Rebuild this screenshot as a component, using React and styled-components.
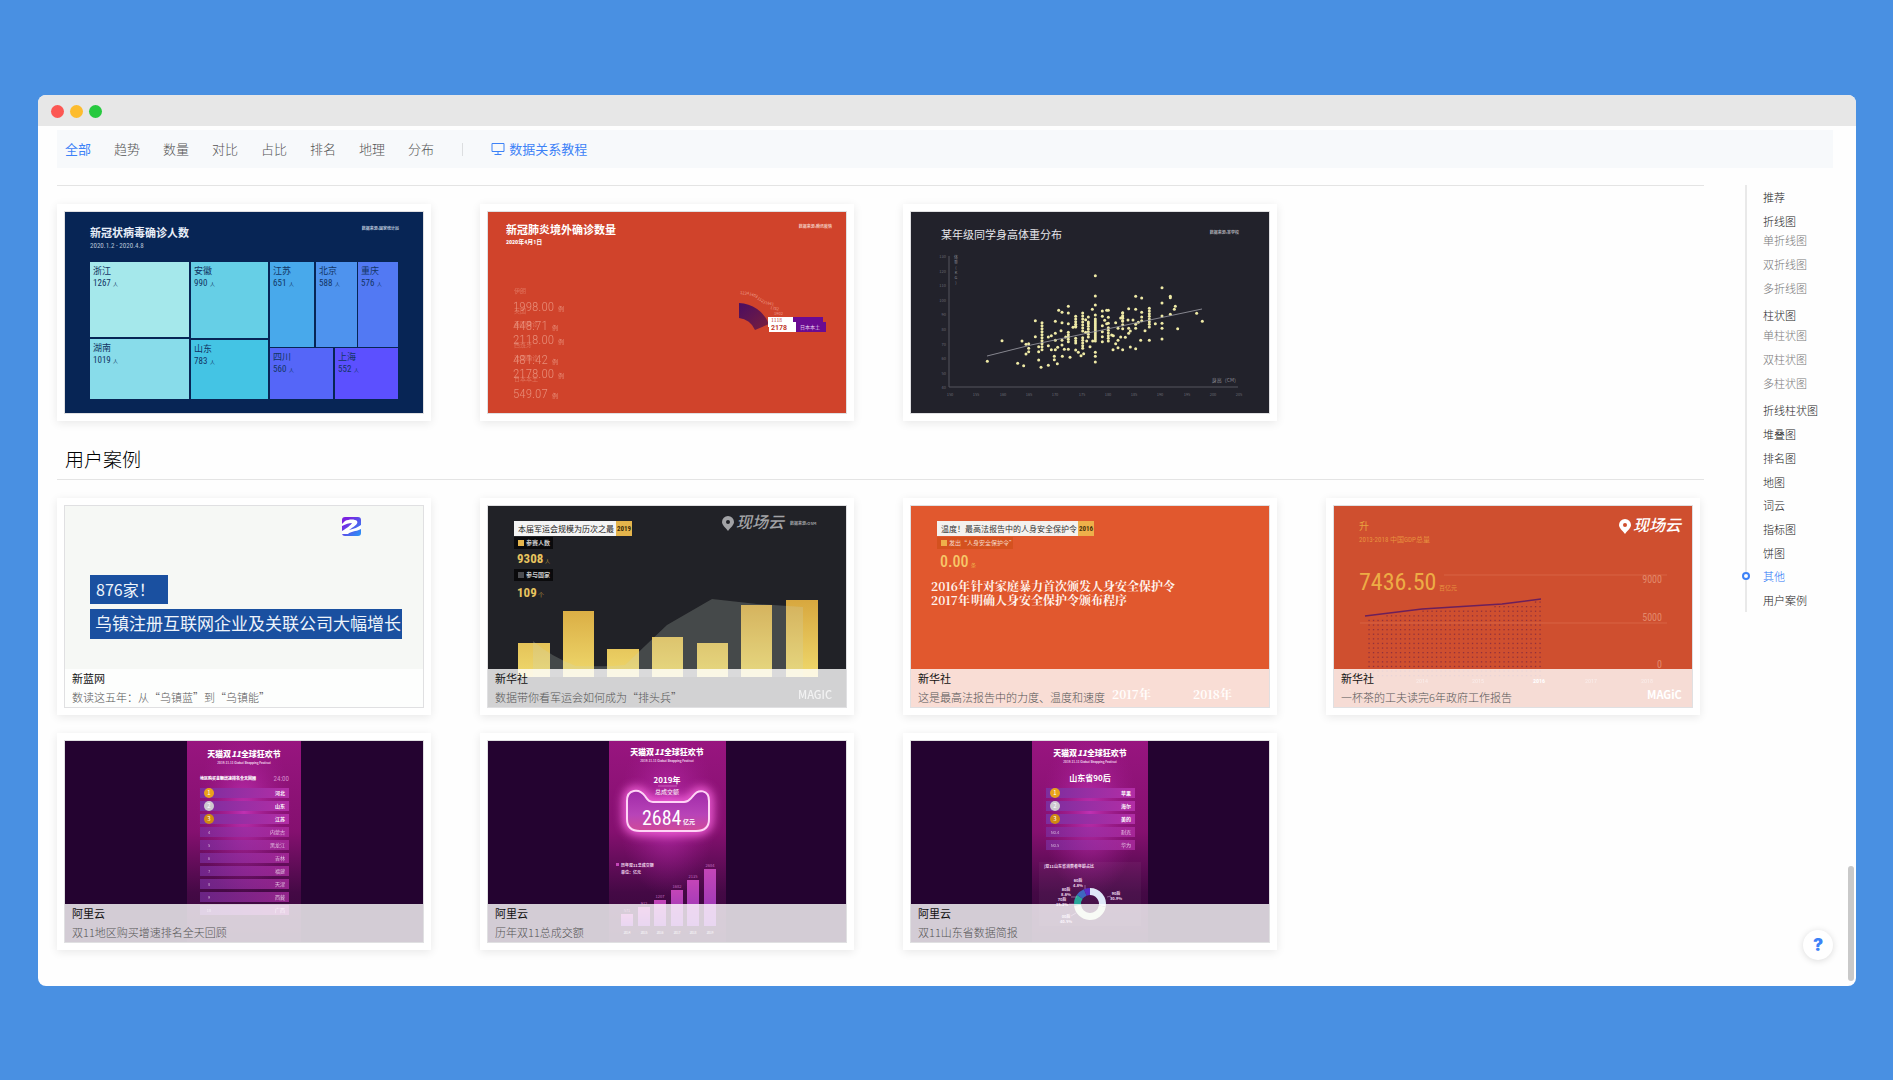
import React from "react";
import styled, { createGlobalStyle, css } from "styled-components";

const NARROW = '"Liberation Sans Narrow", "Roboto Condensed", "DejaVu Sans Condensed", "Noto Sans CJK SC", sans-serif';

const GlobalStyle = createGlobalStyle`
  *, *::before, *::after { box-sizing: border-box; }
  body {
    margin: 0;
    background: #4990e2;
    font-family: "Noto Sans CJK SC", sans-serif;
    font-weight: 300;
    color: #222;
  }
  a { color: inherit; text-decoration: none; }
  ul { list-style: none; margin: 0; padding: 0; }
`;

const Page = styled.div`
  padding: 95px 37px 94px 38px;
`;

const Window = styled.div`
  position: relative;
  border-radius: 8px;
  background: #fefefe;
  overflow: hidden;
`;

const TitleBar = styled.div`
  display: flex;
  align-items: center;
  gap: 6px;
  height: 31px;
  padding: 1px 13px 0;
  background: #e7e7e7;
`;

const Light = styled.span`
  width: 13px;
  height: 13px;
  border-radius: 50%;
  background: ${(p) => p.$color};
`;

const Content = styled.div`
  padding: 4px 23px 36px 19px;
`;

const Toolbar = styled.nav`
  display: flex;
  align-items: center;
  gap: 23px;
  height: 38px;
  padding: 0 8px;
  background: #f7f9fb;
`;

const Tab = styled.button`
  padding: 0;
  border: 0;
  background: none;
  font: inherit;
  font-size: 13px;
  font-weight: ${(p) => (p.$active ? 400 : 300)};
  line-height: 20px;
  color: ${(p) => (p.$active ? "#3d82f7" : "#555")};
  cursor: pointer;
`;

const Separator = styled.span`
  width: 1px;
  height: 13px;
  margin: 0 5px;
  background: #dcdee0;
`;

const TutorialLink = styled.a`
  display: flex;
  align-items: center;
  gap: 4px;
  font-size: 13px;
  font-weight: 400;
  line-height: 20px;
  color: #3d82f7;
`;

const Columns = styled.div`
  display: flex;
  align-items: flex-start;
  margin-top: 17px;
`;

const Main = styled.main`
  flex: 1;
  min-width: 0;
`;

const Grid = styled.div`
  display: grid;
  grid-template-columns: repeat(4, minmax(0, 1fr));
  gap: 18px 49px;
  padding: 18px 4px 0 0;
  border-top: 1px solid #e4e4e4;
`;

const Heading = styled.h2`
  margin: 24px 0 6px;
  padding-left: 8px;
  font-size: 19px;
  font-weight: 300;
  line-height: 28px;
  color: #000;
`;

const CardBox = styled.a`
  display: block;
  padding: 7px;
  background: #fff;
  box-shadow: 0 2px 9px rgba(0, 0, 0, 0.09);
`;

const Thumb = styled.div`
  position: relative;
  border: 1px solid #e0e0e2;
  overflow: hidden;

  svg {
    display: block;
    width: 100%;
    height: auto;
  }
`;

const Caption = styled.div`
  position: absolute;
  left: 0;
  right: 0;
  bottom: 0;
  height: 38px;
  padding: 0 7px;
  background: rgba(255, 255, 255, 0.8);
  font-size: 11px;
  line-height: 19px;
`;

const Owner = styled.div`
  color: #111;
  font-weight: 400;
`;

const Description = styled.div`
  color: #555;
  white-space: nowrap;
`;

const Anchors = styled.ul`
  display: grid;
  grid-auto-rows: 1fr;
  width: 88px;
  height: 427px;
  margin-left: 41px;
  padding-left: 16px;
  border-left: 2px solid #e9e9e9;
`;

const AnchorRow = styled.li`
  display: flex;
  align-items: center;
  padding-bottom: ${(p) => (p.$sub ? 8 : 0)}px;
`;

const AnchorLink = styled.a`
  position: relative;
  font-size: 11px;
  line-height: 14px;
  white-space: nowrap;
  color: ${(p) => (p.$active ? "#2a74f5" : p.$sub ? "#777" : "#222")};

  ${(p) =>
    p.$active &&
    css`
      &::before {
        content: "";
        position: absolute;
        left: -21px;
        top: 3px;
        width: 8px;
        height: 8px;
        border: 2px solid #3d82f7;
        border-radius: 50%;
        background: #fff;
      }
    `}
`;

const HelpButton = styled.button`
  position: absolute;
  right: 23px;
  bottom: 26px;
  width: 30px;
  height: 30px;
  padding: 0;
  border: 0;
  border-radius: 50%;
  background: #fff;
  box-shadow: 0 1px 7px rgba(0, 0, 0, 0.14);
  font: 900 17px/30px Inter, Roboto, sans-serif;
  color: #3d82f7;
  cursor: pointer;
`;

const ScrollThumb = styled.span`
  position: absolute;
  right: 2px;
  bottom: 5px;
  width: 6px;
  height: 115px;
  border-radius: 3px;
  background: #c9c9c9;
`;

const Canvas = ({ bg, label, children }) => (
  <svg viewBox="0 0 358 201" role="img" aria-label={label} fontFamily='"Noto Sans CJK SC", sans-serif' fontWeight="400">
    <rect width="358" height="201" fill={bg} />
    {children}
  </svg>
);

const tiles = [
  ["浙江", "1267", 25, 50, 99, 75, "#a5e8eb", 20],
  ["湖南", "1019", 25, 127, 99, 60, "#88dcea", 20],
  ["安徽", "990", 126, 50, 77, 76, "#66cfe6", 16],
  ["山东", "783", 126, 128, 77, 59, "#44c4e4", 16],
  ["江苏", "651", 205, 50, 44, 85, "#48a9eb", 16],
  ["北京", "588", 251, 50, 41, 85, "#4e93ee", 16],
  ["重庆", "576", 293, 50, 40, 85, "#5279f3", 16],
  ["四川", "560", 205, 136, 63, 51, "#5566f8", 16],
  ["上海", "552", 270, 136, 63, 51, "#5c50ff", 16],
];

const Treemap = () => (
  <Canvas bg="#072555" label="新冠状病毒确诊人数">
    <text x="25" y="25" fontSize="11" fontWeight="700" fill="#e8eef8">新冠状病毒确诊人数</text>
    <text x="25" y="36" fontSize="7" fontFamily={NARROW} fill="#b8c4d8">2020.1.2 - 2020.4.8</text>
    <text x="334" y="18" fontSize="4" fontWeight="700" fill="#b8c4d8" textAnchor="end">数据来源:国家统计局</text>
    {tiles.map(([name, value, x, y, w, h, color, offset]) => (
      <g key={name}>
        <rect x={x} y={y} width={w} height={h} fill={color} />
        <text x={x + 3} y={y + 12} fontSize="9" fill="#123564">{name}</text>
        <text x={x + 3} y={y + 24} fontSize="9" fontFamily={NARROW} fill="#123564">{value}</text>
        <text x={x + 3 + offset} y={y + 24} fontSize="5" fill="#123564">人</text>
      </g>
    ))}
  </Canvas>
);

const counts = [
  ["1998.00", 99, 44],
  ["448.71", 118, 38],
  ["2118.00", 132, 44],
  ["481.42", 152, 38],
  ["2178.00", 166, 44],
  ["549.07", 186, 38],
];

const faintLabels = [
  ["伊朗", 81],
  ["英国", 101],
  ["美国确诊", 114],
  ["西班牙", 135],
  ["法国确诊", 148],
  ["日本本土", 169],
];

const arcNumbers = [
  ["1234", 252, 82, 5],
  ["1402", 261, 83, 20],
  ["1523", 269, 87, 35],
  ["1641", 277, 92, 10],
  ["1782", 282, 97, 10],
  ["1902", 286, 103, 0],
];

const Abroad = () => (
  <Canvas bg="#d0432b" label="新冠肺炎境外确诊数量">
    <defs>
      <linearGradient id="arc" x1="0" y1="0" x2="1" y2="1">
        <stop offset="0" stopColor="#4a0d62" />
        <stop offset="1" stopColor="#7a1f3c" />
      </linearGradient>
    </defs>
    <text x="18" y="22" fontSize="11" fontWeight="700" fill="#fff">新冠肺炎境外确诊数量</text>
    <text x="18" y="32" fontSize="6" fontWeight="700" fontFamily={NARROW} fill="#fff">2020年4月1日</text>
    <text x="344" y="16" fontSize="4" fontWeight="700" fill="#f3c8bd" textAnchor="end">数据来源:腾讯疫情</text>
    {counts.map(([value, y, w]) => (
      <g key={value} fill="#ee9f8b" opacity="0.8">
        <text x="25" y={y} fontSize="13" fontWeight="300" fontFamily={NARROW}>{value}</text>
        <text x={26 + w} y={y} fontSize="6">例</text>
      </g>
    ))}
    {faintLabels.map(([name, y]) => (
      <text key={name} x="26" y={y} fontSize="6" fill="#ee9f8b" opacity="0.5">{name}</text>
    ))}
    <path d="M251 91A34 34 0 0 1 281 112L267 118A19 19 0 0 0 251 106Z" fill="url(#arc)" />
    {arcNumbers.map(([value, x, y, r]) => (
      <text key={value} x={x} y={y} fontSize="4" fill="#ee9f8b" transform={`rotate(${r} ${x} ${y})`}>{value}</text>
    ))}
    <rect x="280" y="105" width="26" height="10" fill="#fff" />
    <rect x="305" y="105" width="30" height="10" fill="#6a0b91" />
    <rect x="281" y="110" width="27" height="10" fill="#fff" />
    <rect x="308" y="110" width="30" height="10" fill="#6a0b91" />
    <text x="283" y="110" fontSize="5" fill="#c0392b">1118</text>
    <text x="283" y="118" fontSize="7" fontWeight="700" fontFamily='Roboto, sans-serif' fill="#c0392b">2178</text>
    <text x="312" y="117" fontSize="5" fill="#e6cdf0">日本本土</text>
  </Canvas>
);

const singles = [
  [604, 242], [604, 303], [604, 330], [804, 278], [725, 304], [743, 309], [829, 304], [829, 308], [804, 324],
  [844, 334], [841, 343], [829, 358], [804, 363], [804, 385], [804, 400], [804, 432], [851, 401], [908, 355], [925, 379],
  [523, 334], [494, 346], [504, 352], [523, 354], [424, 377], [424, 425], [324, 437], [384, 438], [396, 448], [404, 446],
  [404, 460], [404, 470], [396, 477], [434, 470], [434, 455], [434, 495], [280, 499], [371, 505], [389, 512], [441, 517],
  [463, 511], [490, 506], [481, 494], [481, 484], [505, 484], [528, 487], [484, 379], [504, 383], [523, 386], [501, 407],
  [484, 415], [472, 422], [463, 426], [463, 452], [472, 464], [484, 464], [491, 457], [484, 436], [504, 436], [504, 450],
  [511, 463], [523, 463], [545, 465], [553, 472], [561, 482], [569, 476], [515, 426], [537, 397], [545, 394], [595, 343],
  [604, 360], [583, 366], [583, 381], [575, 374], [625, 348], [643, 346], [638, 346], [625, 364], [632, 376], [638, 386],
  [643, 367], [643, 385], [665, 383], [672, 400], [680, 369], [686, 353], [686, 366], [686, 378], [704, 341], [725, 343],
  [743, 352], [743, 366], [743, 377], [702, 375], [717, 375], [733, 382], [725, 388], [725, 400], [753, 407], [740, 436],
  [766, 436], [784, 386], [709, 456], [725, 461], [686, 464], [657, 464], [672, 458], [665, 446], [680, 426], [694, 427],
  [709, 408], [704, 415], [704, 400], [686, 389], [686, 401], [658, 422], [672, 436], [604, 472], [604, 484], [604, 501],
  [588, 455], [596, 438], [578, 438], [575, 412], [583, 426], [625, 392], [625, 410], [625, 425], [625, 440], [653, 420],
];

const stacks = [
  [444, 383, 470, 9],
  [523, 412, 444, 7],
  [545, 364, 400, 8],
  [545, 430, 448, 7],
  [566, 354, 410, 9],
  [566, 428, 466, 8],
  [583, 386, 424, 8],
  [604, 372, 440, 6],
  [643, 398, 440, 8],
  [766, 340, 402, 8],
  [686, 354, 382, 8],
];

const dots = [...singles];
stacks.forEach(([x, from, to, step]) => {
  for (let y = from; y <= to; y += step) dots.push([x, y]);
});

const Scatter = () => (
  <Canvas bg="#22222b" label="某年级同学身高体重分布">
    <text x="30" y="27" fontSize="11" fill="#e6e6ea">某年级同学身高体重分布</text>
    <text x="328" y="22" fontSize="4" fontWeight="700" fill="#aaaab2" textAnchor="end">数据来源:某学校</text>
    <path d="M38 44V175H327" fill="none" stroke="#55555f" />
    {[130, 120, 110, 100, 90, 80, 70, 60, 50, 40].map((v, i) => (
      <text key={v} x="35" y={46 + Math.round(i * 14.6)} fontSize="4" fill="#6a6a74" textAnchor="end">{v}</text>
    ))}
    {[150, 155, 160, 165, 170, 175, 180, 185, 190, 195, 200, 205].map((v, i) => (
      <text key={v} x={39 + Math.round(i * 26.3)} y="184" fontSize="4" fill="#6a6a74" textAnchor="middle">{v}</text>
    ))}
    {["体", "重", "(", "K", "G", ")"].map((c, i) => (
      <text key={c} x="45" y={47 + i * 5} fontSize="4" fill="#8a8a94" textAnchor="middle">{c}</text>
    ))}
    <text x="328" y="170" fontSize="5" fill="#8a8a94" textAnchor="end">身高（CM）</text>
    {dots.map(([x, y]) => (
      <circle key={`${x}-${y}`} cx={(x - 51) / 3} cy={(y - 51) / 3} r="1.5" fill="#efeaa6" />
    ))}
    <path d="M76 144L120 133L291 97" fill="none" stroke="#a0a0a8" strokeWidth="0.8" />
  </Canvas>
);

const Wuzhen = () => (
  <Canvas bg="#f6f8f5" label="乌镇注册互联网企业">
    <defs>
      <linearGradient id="zlogo" x1="0" y1="0" x2="1" y2="1">
        <stop offset="0.2" stopColor="#7a22e0" />
        <stop offset="0.9" stopColor="#2f8cf5" />
      </linearGradient>
    </defs>
    <rect x="277" y="11" width="19" height="19" rx="3" fill="url(#zlogo)" />
    <path d="M280 15C284 13 290 13 292 15C294 18 288 21 284 24C289 23 293 21 296 19V23C290 26 286 25 283 28H277V25C282 22 286 19 287 17C284 17 281 18 277 20V18Z" fill="#fff" />
    <rect x="25" y="69" width="78" height="29" fill="#1a50a0" />
    <rect x="25" y="103" width="312" height="30" fill="#1a50a0" />
    <text x="31" y="90" fontSize="16" fill="#eef4fb">876家！</text>
    <text x="30" y="124" fontSize="17" fill="#eef4fb">乌镇注册互联网企业及关联公司大幅增长</text>
  </Canvas>
);

const LiveLogo = ({ x, y, size, color, hole }) => (
  <g fill={color}>
    <path d={`M${x} ${y}a6 6 0 0 1 12 0c0 3-3 5-6 9c-3-4-6-6-6-9z`} />
    <circle cx={x + 6} cy={y} r="2" fill={hole} />
    <text x={x + 14} y={y + 6} fontSize={size} fontWeight="500" fontStyle="italic">现场云</text>
  </g>
);

const militaryBars = [
  [30, 137, 32], [75, 105, 31], [119, 143, 32], [164, 131, 31], [209, 137, 31], [253, 99, 31], [298, 94, 32],
];

const Military = () => (
  <Canvas bg="#212227" label="本届军运会规模为历次之最">
    <defs>
      <linearGradient id="gold" gradientUnits="userSpaceOnUse" x1="0" y1="95" x2="0" y2="171">
        <stop offset="0" stopColor="#d8a83f" />
        <stop offset="1" stopColor="#efd96d" />
      </linearGradient>
    </defs>
    <rect x="26" y="15" width="102" height="15" fill="#f4f4f4" />
    <rect x="128" y="15" width="16" height="15" fill="#e5b54c" />
    <text x="30" y="26" fontSize="8" fill="#222">本届军运会规模为历次之最</text>
    <text x="136" y="25" fontSize="7" fontWeight="700" fontFamily={NARROW} fill="#3a2c0a" textAnchor="middle">2019</text>
    <rect x="26" y="31" width="39" height="12" fill="#0a0a0c" />
    <rect x="30" y="34" width="6" height="6" fill="#e5b54c" />
    <text x="38" y="39" fontSize="6" fontWeight="700" fill="#ccc">参赛人数</text>
    <text x="29" y="57" fontSize="13" fontWeight="700" fontFamily={NARROW} fill="#e8c45f">9308</text>
    <text x="57" y="57" fontSize="5" fill="#b8923c">人</text>
    <rect x="26" y="63" width="39" height="12" fill="#0a0a0c" />
    <rect x="30" y="66" width="6" height="6" fill="#4b4c50" />
    <text x="38" y="71" fontSize="6" fontWeight="700" fill="#ccc">参与国家</text>
    <text x="29" y="91" fontSize="13" fontWeight="700" fontFamily={NARROW} fill="#e8c45f">109</text>
    <text x="50" y="91" fontSize="6" fill="#b8923c">个</text>
    <LiveLogo x={234} y={16} size={16} color="#a2a3a6" hole="#212227" />
    <text x="302" y="19" fontSize="4" fontWeight="700" fill="#a2a3a6">数据来源:OSM</text>
    {militaryBars.map(([x, y, w]) => (
      <rect key={x} x={x} y={y} width={w} height={171 - y} fill="url(#gold)" />
    ))}
    <path d="M45 135Q62 150 88 160Q120 161 137 159L179 119L224 93L269 98L315 101V171H45Z" fill="#c8d8c8" opacity="0.22" />
    <text x="310" y="193" fontSize="11" fontWeight="500" fill="#fff" opacity="0.7">MAGIC</text>
  </Canvas>
);

const Court = () => (
  <Canvas bg="#e1582e" label="最高法报告中的人身安全保护令">
    <rect x="26" y="15" width="141" height="15" fill="#f4f1ee" />
    <rect x="167" y="15" width="16" height="15" fill="#eeb04a" />
    <text x="30" y="26" fontSize="8" fill="#333">温度！最高法报告中的人身安全保护令</text>
    <text x="175" y="25" fontSize="7" fontWeight="700" fontFamily={NARROW} fill="#4a300a" textAnchor="middle">2016</text>
    <rect x="26" y="31" width="76" height="12" fill="#d4511f" />
    <rect x="30" y="34" width="6" height="6" fill="#eeb04a" />
    <text x="38" y="39" fontSize="6" fill="#f6d9c8">发出“人身安全保护令”</text>
    <text x="29" y="61" fontSize="16" fontWeight="500" fontFamily={NARROW} fill="#f7c668">0.00</text>
    <text x="60" y="61" fontSize="5" fill="#eeb04a">条</text>
    <g fontFamily='"Noto Serif CJK SC", "Liberation Serif", "Noto Sans CJK SC", serif' fontWeight="700" fill="#fff3ec">
      <text x="20" y="85" fontSize="12">2016年</text>
      <text x="60" y="85" fontSize="12">针对家庭暴力首次颁发人身安全保护令</text>
      <text x="20" y="99" fontSize="12">2017年</text>
      <text x="60" y="99" fontSize="12">明确人身安全保护令颁布程序</text>
      <text x="201" y="193" fontSize="12">2017年</text>
      <text x="282" y="193" fontSize="12">2018年</text>
    </g>
  </Canvas>
);

const gdpLine = [[31, 110], [88, 103], [168, 98], [207, 93]];
const gdpTop = (x) => {
  for (let i = 1; i < gdpLine.length; i += 1) {
    const [x0, y0] = gdpLine[i - 1];
    const [x1, y1] = gdpLine[i];
    if (x <= x1) return y0 + ((y1 - y0) * (x - x0)) / (x1 - x0);
  }
  return 93;
};
const gdpDots = [];
for (let x = 35; x <= 207; x += 4.5) {
  for (let y = 96; y < 172; y += 4.6) if (y > gdpTop(x) + 2) gdpDots.push([x, y]);
}

const Gdp = () => (
  <Canvas bg="#cf4f2f" label="2013-2018 中国GDP总量">
    <text x="25" y="24" fontSize="10" fill="#e8a23f">升</text>
    <text x="25" y="36" fontSize="7" fontFamily={NARROW} fill="#e8923f">2013-2018 中国GDP总量</text>
    <path d="M110 69H333M26 117H333" stroke="#db6a49" strokeWidth="0.8" />
    <text x="25" y="84" fontSize="24" fontFamily={NARROW} fill="#edac45">7436.50</text>
    <text x="105" y="84" fontSize="6" fill="#e8923f">百亿元</text>
    <g fontFamily={NARROW} fontSize="10" fill="#e38a6c" textAnchor="end">
      <text x="328" y="77">9000</text>
      <text x="328" y="115">5000</text>
      <text x="328" y="162">0</text>
    </g>
    {gdpDots.map(([x, y]) => (
      <rect key={`${x}-${y}`} x={x - 0.6} y={y - 0.6} width="1.3" height="1.3" fill="#92303c" />
    ))}
    <path d="M31 110L88 103L168 98L207 93" fill="none" stroke="#6b1f5c" strokeWidth="1.4" />
    <LiveLogo x={285} y={19} size={16} color="#fff" hole="#cf4f2f" />
    <g fontSize="6" fill="#fff" textAnchor="middle" fontFamily={NARROW}>
      <text x="88" y="177" opacity="0.5">2014</text>
      <text x="144" y="177" opacity="0.5">2015</text>
      <text x="205" y="177" fontWeight="700">2016</text>
      <text x="257" y="177" opacity="0.5">2017</text>
      <text x="313" y="177" opacity="0.5">2018</text>
    </g>
    <text x="313" y="193" fontSize="11" fontWeight="700" fill="#fff">MAGiC</text>
  </Canvas>
);

const medals = ["#e9a21c", "#cdc9cf", "#d08a12"];

const Poster = ({ id, label, x, w, titleY, children }) => (
  <Canvas bg="#240330" label={label}>
    <defs>
      <linearGradient id={`${id}-bg`} x1="0" y1="0" x2="0" y2="1">
        <stop offset="0" stopColor="#98157f" />
        <stop offset="0.45" stopColor="#84106f" />
        <stop offset="0.75" stopColor="#440945" />
        <stop offset="1" stopColor="#330638" />
      </linearGradient>
      <radialGradient id={`${id}-glow`} cx="0.5" cy="0.35" r="0.42">
        <stop offset="0" stopColor="#d23cc8" stopOpacity="0.75" />
        <stop offset="1" stopColor="#a01a90" stopOpacity="0" />
      </radialGradient>
      <linearGradient id={`${id}-row`}>
        <stop offset="0" stopColor="#7b2fa0" />
        <stop offset="1" stopColor="#b42fa8" />
      </linearGradient>
    </defs>
    <rect x={x} y="0" width={w} height="202" fill={`url(#${id}-bg)`} />
    <rect x={x} y="0" width={w} height="202" fill={`url(#${id}-glow)`} />
    <text x="179" y={titleY} fontSize="8" fontWeight="900" fill="#fff" textAnchor="middle">
      天猫双<tspan fontStyle="italic">11</tspan>全球狂欢节
    </text>
    <text x="179" y={titleY + 7} fontSize="3" fontWeight="700" fill="#f3d5ee" textAnchor="middle">2019.11.11 Global Shopping Festival</text>
    {children}
  </Canvas>
);

const RankRow = ({ id, x, y, rank, name, prefix = "", medal, faded }) => (
  <g>
    <rect x={x} y={y} width="89" height="10" fill={`url(#${id}-row)`} opacity={faded ? 0.7 : 0.95} />
    {medal && <circle cx={x + 9} cy={y + 5} r="5" fill={medal} />}
    <text x={x + 9} y={y + 7} fontSize={medal ? 6 : 4} fill="#fff" opacity={medal ? 1 : 0.6} textAnchor="middle">{prefix}{rank}</text>
    <text x={x + 85} y={y + 7} fontSize="5" fontWeight={medal ? 700 : 400} fill="#fff" opacity={medal ? 1 : 0.7} textAnchor="end">{name}</text>
  </g>
);

const regions = ["河北", "山东", "江苏", "内蒙古", "黑龙江", "吉林", "福建", "天津", "西藏", "广西"];

const Regions = () => (
  <Poster id="regions" label="双11地区购买增速排名" x={122} w={114} titleY={16}>
    <text x="135" y="39" fontSize="4" fontWeight="900" fill="#fff">地区购买金额增速排名全天回顾</text>
    <text x="224" y="40" fontSize="7" fontFamily={NARROW} fill="#d58ccb" textAnchor="end">24:00</text>
    {regions.map((name, i) => (
      <RankRow key={name} id="regions" x={135} y={47 + i * 13} rank={i + 1} name={name} medal={medals[i]} faded={i > 2} />
    ))}
  </Poster>
);

const turnover = [
  [2014, 571, 173], [2015, 912, 166], [2016, 1207, 159], [2017, 1682, 149], [2018, 2135, 139], [2019, 2684, 128],
];
const catOutline = "M139 60C139 48 151 47 157 55C159 58 160 61 165 61H196C201 61 202 58 205 55C210 48 221 48 221 60V78C221 86 216 90 208 90H152C144 90 139 86 139 78Z";

const Turnover = () => (
  <Poster id="turnover" label="历年双11总成交额" x={121} w={117} titleY={14}>
    <defs>
      <filter id="neon" x="-40%" y="-60%" width="180%" height="220%">
        <feGaussianBlur stdDeviation="5" />
      </filter>
      <linearGradient id="turnover-bar" x1="0" y1="0" x2="0" y2="1">
        <stop offset="0" stopColor="#c445b8" />
        <stop offset="1" stopColor="#9035b8" />
      </linearGradient>
      <linearGradient id="turnover-cat" x1="0" y1="0" x2="0" y2="1">
        <stop offset="0" stopColor="#a02aa8" />
        <stop offset="0.6" stopColor="#b844b8" />
        <stop offset="1" stopColor="#d04a98" />
      </linearGradient>
    </defs>
    <path d={catOutline} fill="#c030b0" stroke="#ff6be4" strokeWidth="9" opacity="0.85" filter="url(#neon)" />
    <path d={catOutline} fill="url(#turnover-cat)" stroke="#ffd4f6" strokeWidth="2" />
    <g fill="#fff" textAnchor="middle">
      <text x="179" y="42" fontSize="8" fontWeight="700">2019年</text>
      <text x="179" y="53" fontSize="6">总成交额</text>
    </g>
    <path d="M170 45H189" stroke="#e9a5df" strokeWidth="0.5" />
    <text x="154" y="84" fontSize="20" fontFamily={NARROW} fill="#fff">2684</text>
    <text x="195" y="83" fontSize="6" fontWeight="700" fill="#fff">亿元</text>
    <rect x="128" y="122" width="3" height="3" fill="#c445b8" />
    <text x="133" y="126" fontSize="4" fontWeight="700" fill="#f0d8ee">历年双11总成交额</text>
    <text x="133" y="133" fontSize="4" fontWeight="700" fill="#f0d8ee">单位：亿元</text>
    {turnover.map(([year, value, y], i) => {
      const x = 133 + Math.round(i * 16.5);
      return (
        <g key={year}>
          <rect x={x} y={y} width="12" height={185 - y} fill="url(#turnover-bar)" />
          <text x={x + 6} y={y - 2} fontSize="4" fill="#c66cc0" textAnchor="middle">{value}</text>
          <text x={x + 6} y="193" fontSize="3" fill="#fff" textAnchor="middle">{year}</text>
        </g>
      );
    })}
  </Poster>
);

const brands = ["苹果", "海尔", "美的", "耐克", "华为"];
const slices = [
  [0, 100, "#dfe8f8"],
  [100, 265, "#dcebcf"],
  [265, 305, "#2aa79b"],
  [305, 338, "#3f66c0"],
  [338, 360, "#5b2bc8"],
];
const slicePath = (from, to) => {
  const point = (deg) => {
    const a = ((deg - 90) * Math.PI) / 180;
    return `${179 + 12.5 * Math.cos(a)} ${163 + 12.5 * Math.sin(a)}`;
  };
  return `M${point(from)}A12.5 12.5 0 0 1 ${point(to - 0.01)}`;
};

const Shandong = () => (
  <Poster id="shandong" label="双11山东省数据简报" x={121} w={116} titleY={15}>
    <text x="179" y="40" fontSize="8" fontWeight="700" fill="#fff" textAnchor="middle">山东省90后</text>
    {brands.map((name, i) => (
      <RankRow key={name} id="shandong" x={135} y={47 + i * 13} rank={i + 1} prefix={i > 2 ? "No." : ""} name={name} medal={medals[i]} faded={i > 2} />
    ))}
    <rect x="128" y="121" width="102" height="64" fill="#fff" opacity="0.04" />
    <text x="133" y="127" fontSize="4" fontWeight="700" fill="#f0d8ee">|双11山东省消费者年龄占比</text>
    {slices.map(([from, to, color]) => (
      <path key={from} d={slicePath(from, to)} fill="none" stroke={color} strokeWidth="7" />
    ))}
    <path d="M196 156L200 155M163 163L158 163M174 148V144M166 156H160M165 172L160 175" stroke="#cfa5d8" strokeWidth="0.5" />
    <g fontSize="4" fontWeight="700" fill="#f0d8ee" textAnchor="middle">
      <text x="167" y="141">60后</text>
      <text x="167" y="146">4.8%</text>
      <text x="155" y="150">80后</text>
      <text x="155" y="155">8.6%</text>
      <text x="151" y="160">70后</text>
      <text x="151" y="165">15.2%</text>
      <text x="205" y="154">90后</text>
      <text x="205" y="159">30.9%</text>
      <text x="155" y="177">00后</text>
      <text x="155" y="182">40.5%</text>
    </g>
  </Poster>
);

const templates = [Treemap, Abroad, Scatter];

const cases = [
  [Wuzhen, "新蓝网", "数读这五年：从“乌镇蓝”到“乌镇能”"],
  [Military, "新华社", "数据带你看军运会如何成为“排头兵”"],
  [Court, "新华社", "这是最高法报告中的力度、温度和速度"],
  [Gdp, "新华社", "一杯茶的工夫读完6年政府工作报告"],
  [Regions, "阿里云", "双11地区购买增速排名全天回顾"],
  [Turnover, "阿里云", "历年双11总成交额"],
  [Shandong, "阿里云", "双11山东省数据简报"],
];

const tabs = ["全部", "趋势", "数量", "对比", "占比", "排名", "地理", "分布"];

const anchors = [
  ["推荐"], ["折线图"], ["单折线图", true], ["双折线图", true], ["多折线图", true],
  ["柱状图"], ["单柱状图", true], ["双柱状图", true], ["多柱状图", true],
  ["折线柱状图"], ["堆叠图"], ["排名图"], ["地图"], ["词云"], ["指标图"], ["饼图"], ["其他"], ["用户案例"],
];

const Card = ({ picture: Picture, owner, description }) => (
  <CardBox href="#">
    <Thumb>
      <Picture />
      {owner && (
        <Caption>
          <Owner>{owner}</Owner>
          <Description>{description}</Description>
        </Caption>
      )}
    </Thumb>
  </CardBox>
);

export default function App() {
  return (
    <>
      <GlobalStyle />
      <Page>
        <Window>
          <TitleBar>
            <Light $color="#fc5753" />
            <Light $color="#fdbc2e" />
            <Light $color="#27c93f" />
          </TitleBar>
          <Content>
            <Toolbar>
              {tabs.map((name, i) => (
                <Tab key={name} type="button" $active={i === 0}>{name}</Tab>
              ))}
              <Separator />
              <TutorialLink href="#">
                <svg width="14" height="14" viewBox="0 0 14 14" fill="none" stroke="currentColor" aria-hidden="true">
                  <path d="M1 1.5H13V9.5H1ZM7 9.5V12.5M3.5 12.5H10.5" />
                </svg>
                数据关系教程
              </TutorialLink>
            </Toolbar>
            <Columns>
              <Main>
                <Grid>
                  {templates.map((picture, i) => (
                    <Card key={i} picture={picture} />
                  ))}
                </Grid>
                <Heading>用户案例</Heading>
                <Grid>
                  {cases.map(([picture, owner, description]) => (
                    <Card key={description} picture={picture} owner={owner} description={description} />
                  ))}
                </Grid>
              </Main>
              <Anchors>
                {anchors.map(([name, sub]) => (
                  <AnchorRow key={name} $sub={sub}>
                    <AnchorLink href="#" $sub={sub} $active={name === "其他"}>{name}</AnchorLink>
                  </AnchorRow>
                ))}
              </Anchors>
            </Columns>
          </Content>
          <HelpButton type="button" aria-label="帮助">?</HelpButton>
          <ScrollThumb />
        </Window>
      </Page>
    </>
  );
}
